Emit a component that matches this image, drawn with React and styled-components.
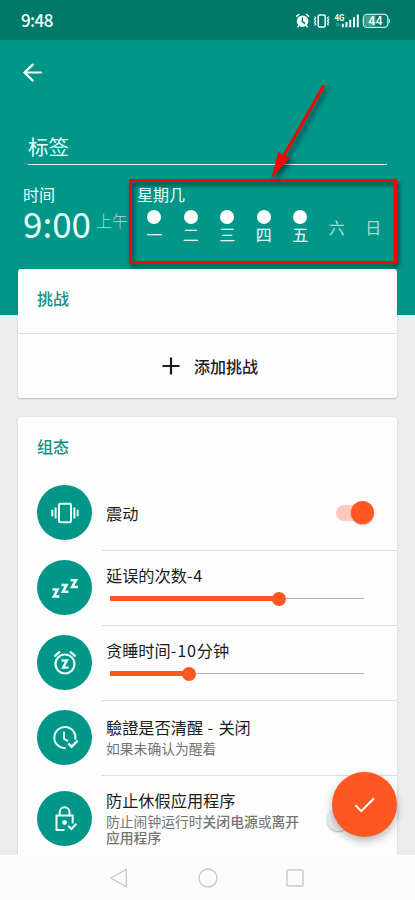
import React from "react"
import styled, { createGlobalStyle, ThemeProvider } from "styled-components"

const theme = {
  teal: "#009688",
  tealDark: "#00796b",
  orange: "#ff5722",
  red: "#ff0000",
  card: "#fdfdfd",
  page: "#ededed",
  line: "#dedede",
  text: "#1c1c1c",
  textSub: "#747474",
}

const GlobalStyle = createGlobalStyle`
  * {
    box-sizing: border-box;
  }

  body {
    margin: 0;
    font-family: "Noto Sans CJK SC", "Noto Sans", sans-serif;
  }

  svg {
    display: block;
  }
`

const Phone = styled.div`
  position: relative;
  display: flex;
  flex-direction: column;
  width: 415px;
  height: 900px;
  overflow: hidden;
  background: ${props => props.theme.page};
`

const StatusBar = styled.header`
  display: flex;
  flex: none;
  align-items: center;
  justify-content: space-between;
  height: 40px;
  padding: 1px 25px 0 21px;
  background: ${props => props.theme.tealDark};
  color: #f2fffc;
`

const Clock = styled.span`
  margin-top: -1px;
  font-size: 17px;
  font-weight: 500;
  letter-spacing: -0.6px;
  line-height: 24px;
`

const Hero = styled.section`
  flex: none;
  height: 275px;
  background: ${props => props.theme.teal};
  color: #e6fffa;
`

const TopBar = styled.div`
  height: 88px;
  padding: 22px 0 0 22px;
`

const LabelField = styled.div`
  height: 37px;
  margin: 0 28px;
  border-bottom: 1px solid #e0fbf6;
  font-size: 20.5px;
  line-height: 36px;
`

const Schedule = styled.div`
  display: flex;
  padding-top: 19px;
`

const TimeBlock = styled.div`
  width: 136px;
  padding-left: 23px;
`

const Caption = styled.div`
  height: 20px;
  padding-left: ${props => (props.$inset ? 1 : 0)}px;
  font-size: 16px;
  line-height: 20px;
`

const Time = styled.div`
  display: flex;
  align-items: center;
  height: 38px;
  font-size: 35px;
  line-height: 38px;
  white-space: nowrap;

  small {
    margin: -7px 0 0 5px;
    color: #a5dcd5;
    font-size: 16px;
    font-weight: 300;
  }
`

const Days = styled.div`
  display: grid;
  grid-template-columns: repeat(7, 36.5px);
`

const Day = styled.div`
  display: flex;
  flex-direction: column;
  align-items: center;
  height: 42px;
  padding-top: ${props => (props.$on ? "6px" : "13px")};
  color: ${props => (props.$on ? "#e6fffa" : "#a5dcd5")};
  font-size: 16px;
  line-height: 20px;
`

const Dot = styled.i`
  flex: none;
  width: 14px;
  height: 14px;
  border-radius: 50%;
  background: #fff;
`

const Content = styled.main`
  flex: 1;
  min-height: 0;
  margin-top: -46px;
  padding: 0 18px;
  overflow: hidden;
`

const Card = styled.section`
  margin-bottom: 19px;
  border-radius: 3px;
  background: ${props => props.theme.card};
  box-shadow: 0 1px 2px rgba(0, 0, 0, 0.22);
`

const CardTitle = styled.h2`
  height: ${props => props.$height}px;
  margin: 0;
  padding: 0 19px;
  color: #158f83;
  font-size: 16px;
  font-weight: 500;
  line-height: 58px;
`

const AddButton = styled.button`
  display: flex;
  align-items: center;
  gap: 14px;
  width: 100%;
  height: 65px;
  padding: 0 0 0 144px;
  border: 0;
  border-top: 1px solid ${props => props.theme.line};
  background: none;
  color: ${props => props.theme.text};
  font-family: inherit;
  font-size: 16px;
  font-weight: 500;
`

const Row = styled.div`
  display: flex;
  height: ${props => props.$height || 75}px;
  padding-left: 19px;
`

const RowIcon = styled.div`
  display: flex;
  flex: none;
  align-self: center;
  align-items: center;
  justify-content: center;
  width: 55px;
  height: 55px;
  border-radius: 50%;
  background: ${props => props.theme.teal};
`

const RowBody = styled.div`
  display: flex;
  flex: 1;
  align-items: center;
  justify-content: space-between;
  min-width: 0;
  margin-left: 9px;
  padding: 0 21px 0 5px;
  border-top: ${props => (props.$first ? 0 : 1)}px solid ${props => props.theme.line};
`

const RowText = styled.div`
  flex: 1;
`

const RowTitle = styled.div`
  color: ${props => props.theme.text};
  font-size: 16.2px;
  line-height: 24px;
  white-space: nowrap;

  span {
    letter-spacing: 0.8px;
  }
`

const RowSub = styled.div`
  width: 200px;
  padding: 1px 0 5px;
  color: ${props => props.theme.textSub};
  font-size: 13.8px;
  line-height: 16px;

  b {
    font-weight: 500;
  }
`

const Slider = styled.div`
  display: flex;
  align-items: center;
  width: 254px;
  height: 14px;
  margin: 5px 0 8px 4px;
`

const SliderFill = styled.div`
  height: 5px;
  background: ${props => props.theme.orange};
`

const SliderThumb = styled.div`
  flex: none;
  width: 14px;
  height: 14px;
  margin: 0 -7px;
  border-radius: 50%;
  background: ${props => props.theme.orange};
`

const SliderRest = styled.div`
  flex: 1;
  height: 1px;
  margin-left: 7px;
  background: #b4b4b4;
`

const Switch = styled.div`
  display: flex;
  align-items: center;
  justify-content: ${props => (props.$on ? "flex-end" : "flex-start")};
  width: 34px;
  height: 16px;
  margin: 0 6px 0 0;
  border-radius: 8px;
  background: ${props => (props.$on ? "#ffcabb" : "#c9c9c9")};

  &::after {
    content: "";
    flex: none;
    width: 23px;
    height: 23px;
    margin: 0 -4px 0 -9px;
    border-radius: 50%;
    background: ${props => (props.$on ? props.theme.orange : "#ececec")};
    box-shadow: 0 1px 2px rgba(0, 0, 0, 0.3);
  }
`

const NavBar = styled.nav`
  display: flex;
  flex: none;
  align-items: center;
  justify-content: space-between;
  height: 45px;
  padding: 0 111px 0 109px;
  background: #fcfcfc;
`

const Fab = styled.button`
  position: absolute;
  top: 772px;
  left: 332px;
  display: flex;
  align-items: center;
  justify-content: center;
  width: 65px;
  height: 65px;
  padding: 0;
  border: 0;
  border-radius: 50%;
  background: ${props => props.theme.orange};
  box-shadow: 0 4px 8px rgba(0, 0, 0, 0.28);
`

const Highlight = styled.div`
  position: absolute;
  top: 179px;
  left: 129px;
  width: 268px;
  height: 85px;
  border: 3px solid ${props => props.theme.red};
  filter: drop-shadow(2px 3px 2px rgba(0, 0, 0, 0.6));
`

const Pointer = styled.svg`
  position: absolute;
  top: 80px;
  left: 262px;
  filter: drop-shadow(3px 3px 2px rgba(0, 0, 0, 0.5));
`

const days = ["一", "二", "三", "四", "五", "六", "日"]

const StatusIcons = () => (
  <svg width="94" height="18" viewBox="0 0 94 18" fill="none">
    <circle cx="6.6" cy="9.2" r="5.8" fill="#f2fffc" />
    <path d="M.3 4.6l3-2.6M13 4.6l-3-2.6M2.8 13.6l-1.2 1.6M10.4 13.6l1.2 1.6" stroke="#f2fffc" strokeWidth="1.6" />
    <path d="M6.4 5.6v4l2.7 2" stroke="#00796b" strokeWidth="1.4" />
    <rect x="22.2" y="2.9" width="7" height="12" rx="1.2" stroke="#e6fffa" strokeWidth="1.5" />
    <path d="M18.6 4.5l1 1.5-1 1.5 1 1.5-1 1.5 1 1.5-1 1.5M32.6 4.5l-1 1.5 1 1.5-1 1.5 1 1.5-1 1.5 1 1.5" stroke="#e6fffa" strokeWidth="1.3" />
    <text x="38.4" y="9" fill="#f2fffc" fontFamily="Roboto" fontSize="9" fontWeight="700" textLength="10" lengthAdjust="spacingAndGlyphs">4G</text>
    <path d="M41 14.5v-3.5l-1.2 1.2M42.6 11v3.5l1.2-1.2" stroke="#4ba89b" strokeWidth=".9" />
    <path d="M46.8 15.3v-3.6M50.5 15.3V10M54.2 15.3V7.8M58 15.3V5.2M61.8 15.3V2.6" stroke="#f2fffc" strokeWidth="2" />
    <rect x="67.4" y="2.4" width="24.4" height="13" rx="3.6" stroke="#bce9e1" strokeWidth="1.4" />
    <path d="M70.5 3.2h9v11.4h-9a2.2 2.2 0 0 1-2.2-2.2v-7a2.2 2.2 0 0 1 2.2-2.2z" fill="#469f93" />
    <path d="M93.4 7v4" stroke="#bce9e1" strokeWidth="1.2" />
    <text x="72.3" y="13.4" fill="#fff" fontFamily="Inter" fontSize="12.3" fontWeight="600" textLength="14.4" lengthAdjust="spacingAndGlyphs">44</text>
  </svg>
)

const VibrateIcon = () => (
  <svg width="30" height="24" viewBox="0 0 30 24" fill="none" stroke="#e9fffb" strokeWidth="2">
    <rect x="9" y="2.7" width="12" height="18.6" rx="1.4" />
    <path d="M5.6 6.5v11M2.3 8.7v6.6M24.4 6.5v11M27.7 8.7v6.6" />
  </svg>
)

const SnoozeIcon = () => (
  <svg width="28" height="22" viewBox="0 0 28 22" fill="none" stroke="#e9fffb" strokeWidth="2.5">
    <path d="M1.4 12.6h5.2l-3.8 6.9h5.6M10.4 7.9h5.2l-3.8 6.9h5.6M19.6 3.2h5.4l-3.8 6.9h5.8" />
  </svg>
)

const AlarmIcon = () => (
  <svg width="26" height="26" viewBox="0 0 26 26" fill="none" stroke="#e9fffb" strokeWidth="2.2">
    <circle cx="13" cy="14" r="9.5" />
    <path d="M2.3 6.3L8 1.6M23.7 6.3L18 1.6" />
    <path d="M9.5 10.5h5.4l-3.8 7.1h5.6" strokeWidth="2.4" />
  </svg>
)

const ClockCheckIcon = () => (
  <svg width="26" height="26" viewBox="0 0 26 26" fill="none" stroke="#e9fffb" strokeWidth="2">
    <path d="M13.8 23.1A10.6 10.6 0 1 1 23.3 14.6" />
    <path d="M12 6.8v7l4 2.4" />
    <path d="M16.3 18.3l3.4 3.4 6-6" strokeWidth="2.4" />
  </svg>
)

const LockCheckIcon = () => (
  <svg width="24" height="26" viewBox="0 0 24 26" fill="none" stroke="#e9fffb" strokeWidth="2">
    <path d="M11.5 24H3.5V9.5h16.2v8M6.7 9.5V6.2a4.9 4.9 0 0 1 9.8 0v3.3" />
    <circle cx="11.6" cy="16.5" r="2.4" fill="#e9fffb" stroke="none" />
    <path d="M15.2 19.8l3.2 3.2 5-5.4" />
  </svg>
)

const settings = [
  { icon: <VibrateIcon />, title: "震动", on: true },
  { icon: <SnoozeIcon />, title: "延误的次数", suffix: "-4", value: 66.6 },
  { icon: <AlarmIcon />, title: "贪睡时间", suffix: "-10", unit: "分钟", value: 31.1 },
  { icon: <ClockCheckIcon />, title: "驗證是否清醒", suffix: " - ", unit: "关闭", sub: "如果未确认为醒着" },
  {
    icon: <LockCheckIcon />,
    title: "防止休假应用程序",
    sub: (
      <>
        防止闹钟运行时<b>关闭电源</b>或<b>离开应用程序</b>
      </>
    ),
    on: false,
    height: 87,
  },
]

const Setting = ({ item, first }) => (
  <Row $height={item.height}>
    <RowIcon>{item.icon}</RowIcon>
    <RowBody $first={first}>
      <RowText>
        <RowTitle>
          {item.title}
          {item.suffix && <span>{item.suffix}</span>}
          {item.unit}
        </RowTitle>
        {item.sub && <RowSub>{item.sub}</RowSub>}
        {item.value && (
          <Slider>
            <SliderFill style={{ width: `${item.value}%` }} />
            <SliderThumb />
            <SliderRest />
          </Slider>
        )}
      </RowText>
      {item.on !== undefined && <Switch $on={item.on} />}
    </RowBody>
  </Row>
)

const App = () => (
  <ThemeProvider theme={theme}>
    <GlobalStyle />
    <Phone>
      <StatusBar>
        <Clock>9:48</Clock>
        <StatusIcons />
      </StatusBar>
      <Hero>
        <TopBar>
          <svg width="22" height="22" viewBox="0 0 22 22" fill="none" stroke="#f2fffc" strokeWidth="2.2" strokeLinecap="round">
            <path d="M19 10.5H2.5M10.8 2.6l-8.3 7.9 8.3 8.1" />
          </svg>
        </TopBar>
        <LabelField>标签</LabelField>
        <Schedule>
          <TimeBlock>
            <Caption>时间</Caption>
            <Time>
              9:00<small>上午</small>
            </Time>
          </TimeBlock>
          <div>
            <Caption $inset>星期几</Caption>
            <Days>
              {days.map((day, index) => (
                <Day key={day} $on={index < 5}>
                  {index < 5 && <Dot />}
                  {day}
                </Day>
              ))}
            </Days>
          </div>
        </Schedule>
      </Hero>
      <Content>
        <Card>
          <CardTitle $height={64}>挑战</CardTitle>
          <AddButton>
            <svg width="18" height="18" viewBox="0 0 18 18" stroke="#1c1c1c" strokeWidth="2.2">
              <path d="M.5 9h17M9 .5v17" />
            </svg>
            添加挑战
          </AddButton>
        </Card>
        <Card>
          <CardTitle $height={58}>组态</CardTitle>
          {settings.map((item, index) => (
            <Setting key={item.title} item={item} first={index === 0} />
          ))}
        </Card>
      </Content>
      <NavBar>
        <svg width="20" height="22" viewBox="0 0 20 22" fill="none" stroke="#c9c9c9" strokeWidth="1.4">
          <path d="M17.3 2.3v17.4L1.8 11z" strokeLinejoin="round" />
        </svg>
        <svg width="20" height="20" viewBox="0 0 20 20" fill="none" stroke="#c9c9c9" strokeWidth="1.4">
          <circle cx="10" cy="10" r="9" />
        </svg>
        <svg width="18" height="18" viewBox="0 0 18 18" fill="none" stroke="#c9c9c9" strokeWidth="1.4">
          <rect x="1" y="1" width="16" height="16" rx="1" />
        </svg>
      </NavBar>
      <Fab>
        <svg width="22" height="18" viewBox="0 0 22 18" fill="none" stroke="#fff" strokeWidth="2">
          <path d="M1.5 9.2l5.8 5.9L20 2.3" />
        </svg>
      </Fab>
      <Highlight />
      <Pointer width="76" height="104" viewBox="0 0 76 104">
        <path d="M61.2 6.5L20.5 78" stroke="#ff0000" strokeWidth="3" strokeLinecap="round" />
        <path d="M9.7 97.8L16.6 72l4.6 4.4 6.4 1.2z" fill="#ff0000" stroke="#ff0000" strokeWidth=".6" />
      </Pointer>
    </Phone>
  </ThemeProvider>
)

export default App
